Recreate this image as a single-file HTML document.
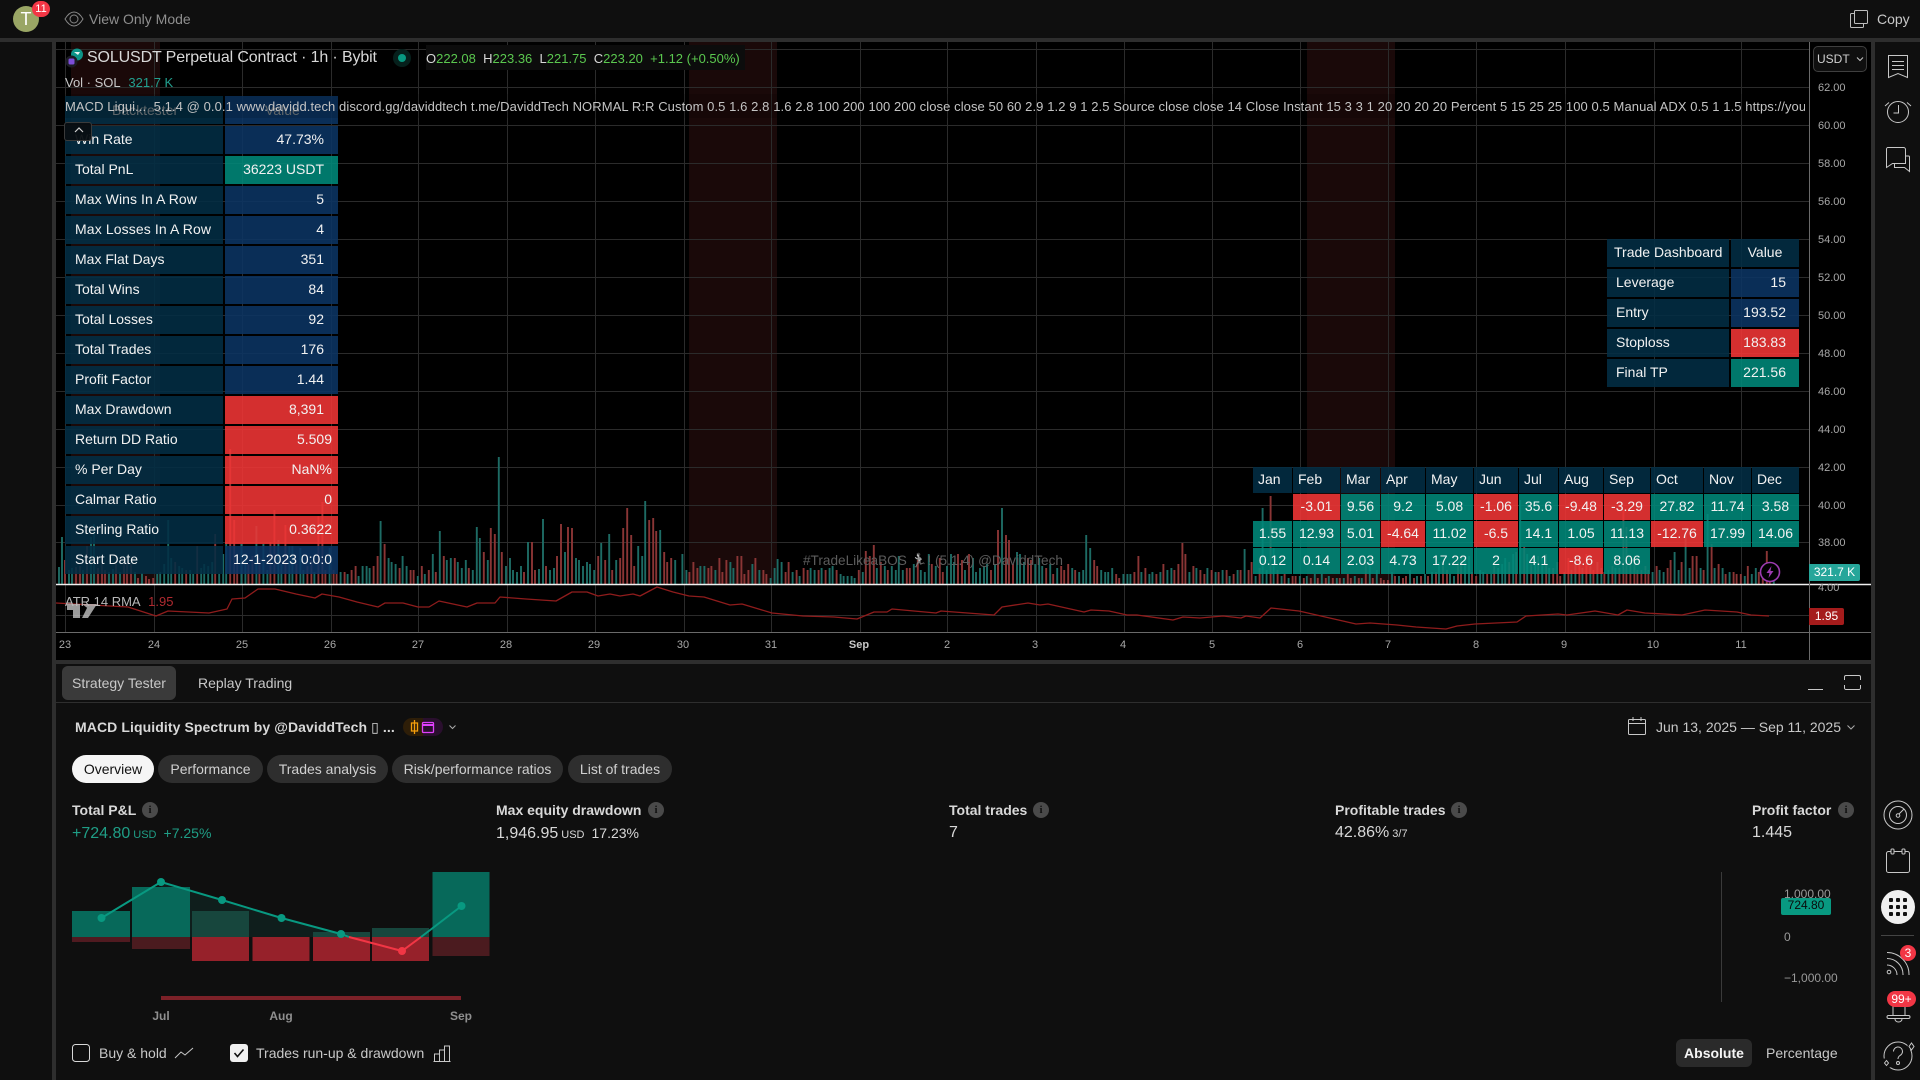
<!DOCTYPE html>
<html lang="en"><head><meta charset="utf-8"><title>SOLUSDT Strategy Tester</title>
<style>
html,body{margin:0;padding:0;background:#0f0f0f}
body{position:relative;width:1920px;height:1080px;overflow:hidden;font-family:"Liberation Sans",Arial,sans-serif;color:#ddd}
.a{position:absolute;white-space:nowrap}
.t{position:absolute;white-space:nowrap;line-height:16px}
.c{position:absolute;height:28px;line-height:26px;font-size:14px;color:#f2f2f2;box-sizing:border-box;white-space:nowrap}
.l{left:65px;width:158px;padding-left:10px;background:rgba(2,45,68,.88)}
.v{left:225px;width:113px;padding-right:14px;text-align:right;background:rgba(11,52,99,.88)}
.n{padding-right:6px}
.l2{left:1607px;width:122px;padding-left:9px;background:rgba(2,45,68,.88)}
.v2{left:1731px;width:68px;text-align:right;padding-right:13px;background:rgba(11,52,99,.88)}
.m{position:absolute;height:26px;line-height:24px;font-size:14px;color:#f2f2f2;text-align:center;background:rgba(0,137,122,.88);white-space:nowrap}
.mh{position:absolute;height:26px;line-height:24px;font-size:14px;color:#f2f2f2;background:rgba(2,45,68,.88);box-sizing:border-box;padding-left:5px}
.r{background:rgba(241,54,54,.88)}
.g{background:rgba(0,137,122,.88)}
.p{position:absolute;text-align:center;top:755px;height:28px;line-height:28px;font-size:14px;border-radius:14px;background:#2e2e2e;color:#d0d0d0}
.ax{position:absolute;left:1818px;font-size:11px;line-height:14px;color:#a8a8a8}
.tm{position:absolute;top:638px;width:40px;text-align:center;font-size:11px;line-height:14px;color:#a8a8a8}
.b{font-weight:bold;font-size:14px;color:#d8d8d8}
.i{position:absolute;width:16px;height:16px;border-radius:50%;background:#4a4a4a;color:#111;font:bold 11px/16px "Liberation Serif",serif;text-align:center}
.tx{font-size:16px;color:#d8d8d8}
svg{position:absolute;left:0;top:0}
</style></head>
<body>
<svg width="1920" height="1080" viewBox="0 0 1920 1080" fill="none">
<rect x="0" y="38" width="1920" height="4" fill="#2e2e2e"/>
<rect x="52" y="42" width="4" height="1038" fill="#2e2e2e"/>
<rect x="1871" y="42" width="4" height="1038" fill="#2e2e2e"/>
<rect x="56" y="42" width="1815" height="618" fill="#000"/>
<rect x="52" y="660" width="1823" height="4" fill="#2e2e2e"/>
<rect x="71" y="42" width="89" height="542" fill="#1a0909"/>
<rect x="689" y="42" width="88" height="542" fill="#1a0909"/>
<rect x="1307" y="42" width="88" height="542" fill="#1a0909"/>
<path stroke="#2b2b2b" d="M56 49.500H1809M56 87.500H1809M56 125.500H1809M56 163.500H1809M56 201.500H1809M56 239.500H1809M56 277.500H1809M56 315.500H1809M56 353.500H1809M56 391.500H1809M56 429.500H1809M56 467.500H1809M56 505.500H1809M56 542.500H1809M56 615.500H1809M65.500 42V632M154.500 42V632M242.500 42V632M331.500 42V632M418.500 42V632M507.500 42V632M595.500 42V632M684.500 42V632M771.500 42V632M860.500 42V632M947.500 42V632M1036.500 42V632M1124.500 42V632M1212.500 42V632M1300.500 42V632M1388.500 42V632M1476.500 42V632M1565.500 42V632M1654.500 42V632M1741.500 42V632"/>
<g stroke-width="1.9">
<g transform="translate(65 584)"><path stroke="#1d6b64" d="M-6 0v-17M-3 0v-47M4 0v-14M7 0v-16M18 0v-14M26 0v-47M29 0v-60M44 0v-12M48 0v-15M55 0v-12M70 0v-12M77 0v-11"/><path stroke="#8a3535" d="M0 0v-24M11 0v-17M15 0v-18M22 0v-38M33 0v-16M37 0v-20M40 0v-14M51 0v-20M59 0v-20M62 0v-21M66 0v-20M73 0v-6M81 0v-8M84 0v-5"/></g>
<g transform="translate(153.200 584)"><path stroke="#1d6b64" d="M4 0v-10M7 0v-12M11 0v-20M15 0v-64M18 0v-26M26 0v-18M29 0v-16M37 0v-14M40 0v-10M48 0v-16M51 0v-20M55 0v-18M59 0v-22M66 0v-10M70 0v-30M73 0v-42"/><path stroke="#8a3535" d="M0 0v-6M22 0v-22M33 0v-14M44 0v-38M62 0v-50M77 0v-135M81 0v-64M84 0v-30"/></g>
<g transform="translate(241.400 584)"><path stroke="#1d6b64" d="M0 0v-40M4 0v-30M15 0v-58M22 0v-40M26 0v-14M37 0v-44M40 0v-20M48 0v-38M51 0v-38M59 0v-36M62 0v-14M73 0v-12"/><path stroke="#8a3535" d="M7 0v-20M11 0v-28M18 0v-26M29 0v-42M33 0v-74M44 0v-59M55 0v-20M66 0v-18M70 0v-24M77 0v-68M81 0v-82M84 0v-14"/></g>
<g transform="translate(329.600 584)"><path stroke="#1d6b64" d="M0 0v-36M11 0v-12M18 0v-10M29 0v-8M33 0v-18M37 0v-18M40 0v-16M51 0v-63M59 0v-26M62 0v-22M66 0v-20M73 0v-28M77 0v-18"/><path stroke="#8a3535" d="M4 0v-14M7 0v-10M15 0v-12M22 0v-14M26 0v-18M44 0v-18M48 0v-28M55 0v-40M70 0v-16M81 0v-14M84 0v-14"/></g>
<g transform="translate(417.800 584)"><path stroke="#1d6b64" d="M0 0v-8M7 0v-10M15 0v-30M22 0v-53M29 0v-24M33 0v-26M40 0v-22M44 0v-16M48 0v-24M55 0v-14M59 0v-57M62 0v-46M70 0v-24M81 0v-127"/><path stroke="#8a3535" d="M4 0v-18M11 0v-14M18 0v-12M26 0v-28M37 0v-26M51 0v-16M66 0v-32M73 0v-56M77 0v-50M84 0v-32"/></g>
<g transform="translate(506 584)"><path stroke="#1d6b64" d="M0 0v-18M4 0v-26M7 0v-14M11 0v-12M15 0v-18M22 0v-42M33 0v-15M37 0v-65M44 0v-14M48 0v-16M59 0v-32M70 0v-26M73 0v-24M77 0v-18M81 0v-22M84 0v-20"/><path stroke="#8a3535" d="M18 0v-12M26 0v-42M29 0v-14M40 0v-18M51 0v-28M55 0v-60M62 0v-57M66 0v-56"/></g>
<g transform="translate(594.200 584)"><path stroke="#1d6b64" d="M0 0v-14M7 0v-41M15 0v-50M22 0v-24M44 0v-38M48 0v-28M51 0v-83M66 0v-54M81 0v-24"/><path stroke="#8a3535" d="M4 0v-28M11 0v-24M18 0v-14M26 0v-26M29 0v-56M33 0v-76M37 0v-49M40 0v-18M55 0v-64M59 0v-66M62 0v-53M70 0v-32M73 0v-22M77 0v-26"/></g>
<g transform="translate(682.400 584)"><path stroke="#1d6b64" d="M0 0v-30M4 0v-14M18 0v-18M22 0v-18M33 0v-14M48 0v-22M51 0v-16M70 0v-20M77 0v-14"/><path stroke="#8a3535" d="M7 0v-12M11 0v-22M15 0v-16M26 0v-16M29 0v-18M37 0v-26M40 0v-12M44 0v-24M55 0v-28M59 0v-28M62 0v-10M66 0v-14M73 0v-26M81 0v-14M84 0v-10"/></g>
<g transform="translate(770.600 584)"><path stroke="#1d6b64" d="M0 0v-6M4 0v-16M7 0v-25M11 0v-22M22 0v-12M29 0v-8M40 0v-16M44 0v-14M51 0v-16M59 0v-16M62 0v-18M70 0v-10M73 0v-8M77 0v-8M81 0v-8M84 0v-6"/><path stroke="#8a3535" d="M15 0v-12M18 0v-22M26 0v-14M33 0v-16M37 0v-14M48 0v-14M55 0v-14M66 0v-14"/></g>
<g transform="translate(858.800 584)"><path stroke="#1d6b64" d="M4 0v-12M18 0v-16M26 0v-18M33 0v-18M37 0v-14M40 0v-28M44 0v-14M55 0v-20M62 0v-14M66 0v-12M70 0v-30M77 0v-18"/><path stroke="#8a3535" d="M0 0v-14M7 0v-33M11 0v-28M15 0v-39M22 0v-22M29 0v-14M48 0v-16M51 0v-16M59 0v-24M73 0v-20M81 0v-26M84 0v-12"/></g>
<g transform="translate(947 584)"><path stroke="#1d6b64" d="M0 0v-18M4 0v-30M7 0v-22M18 0v-14M26 0v-26M29 0v-12M33 0v-16M37 0v-18M40 0v-20M48 0v-20M55 0v-76M70 0v-32M73 0v-30M77 0v-22"/><path stroke="#8a3535" d="M11 0v-30M15 0v-24M22 0v-30M44 0v-14M51 0v-54M59 0v-49M62 0v-44M66 0v-20M81 0v-26M84 0v-24"/></g>
<g transform="translate(1035.200 584)"><path stroke="#1d6b64" d="M0 0v-20M4 0v-26M7 0v-18M15 0v-20M22 0v-16M37 0v-16M44 0v-12M48 0v-14M51 0v-49M55 0v-36M66 0v-14M70 0v-12M73 0v-12M77 0v-16"/><path stroke="#8a3535" d="M11 0v-16M18 0v-10M26 0v-18M29 0v-14M33 0v-20M40 0v-14M59 0v-24M62 0v-18M81 0v-10M84 0v-6"/></g>
<g transform="translate(1123.400 584)"><path stroke="#1d6b64" d="M0 0v-10M4 0v-10M7 0v-10M18 0v-12M26 0v-10M29 0v-12M37 0v-12M44 0v-14M48 0v-16M66 0v-12M73 0v-16M84 0v-16"/><path stroke="#8a3535" d="M11 0v-12M15 0v-28M22 0v-16M33 0v-10M40 0v-20M51 0v-14M55 0v-20M59 0v-41M62 0v-30M70 0v-18M77 0v-14M81 0v-10"/></g>
<g transform="translate(1211.600 584)"><path stroke="#1d6b64" d="M4 0v-12M11 0v-14M18 0v-8M26 0v-14M33 0v-35M44 0v-8M51 0v-76M55 0v-14M62 0v-36M70 0v-8M77 0v-6"/><path stroke="#8a3535" d="M0 0v-14M7 0v-12M15 0v-14M22 0v-10M29 0v-14M37 0v-14M40 0v-22M48 0v-16M59 0v-88M66 0v-14M73 0v-10M81 0v-8M84 0v-8"/></g>
<g transform="translate(1299.800 584)"><path stroke="#1d6b64" d="M0 0v-8M7 0v-8M15 0v-10M22 0v-10M29 0v-8M37 0v-6M44 0v-6M55 0v-8M62 0v-6M70 0v-22M77 0v-14"/><path stroke="#8a3535" d="M4 0v-6M11 0v-6M18 0v-6M26 0v-6M33 0v-6M40 0v-6M48 0v-10M51 0v-6M59 0v-6M66 0v-22M73 0v-6M81 0v-6M84 0v-4"/></g>
<g transform="translate(1388 584)"><path stroke="#1d6b64" d="M4 0v-12M11 0v-8M22 0v-14M29 0v-8M37 0v-10M44 0v-12M51 0v-22M62 0v-10M66 0v-8M77 0v-26M81 0v-28"/><path stroke="#8a3535" d="M0 0v-4M7 0v-8M15 0v-6M18 0v-8M26 0v-6M33 0v-8M40 0v-8M48 0v-12M55 0v-20M59 0v-14M70 0v-22M73 0v-26M84 0v-12"/></g>
<g transform="translate(1476.200 584)"><path stroke="#1d6b64" d="M4 0v-14M7 0v-12M15 0v-10M22 0v-16M26 0v-20M29 0v-26M37 0v-30M44 0v-84M51 0v-30M59 0v-24M66 0v-26M73 0v-16"/><path stroke="#8a3535" d="M0 0v-8M11 0v-10M18 0v-18M33 0v-22M40 0v-32M48 0v-37M55 0v-22M62 0v-28M70 0v-30M77 0v-16M81 0v-22M84 0v-8"/></g>
<g transform="translate(1564.400 584)"><path stroke="#1d6b64" d="M0 0v-12M7 0v-14M11 0v-20M18 0v-16M26 0v-18M33 0v-22M37 0v-16M44 0v-14M51 0v-16"/><path stroke="#8a3535" d="M4 0v-26M15 0v-22M22 0v-30M29 0v-14M40 0v-12M48 0v-18M55 0v-16M59 0v-74M62 0v-57M66 0v-24M70 0v-28M73 0v-14M77 0v-14M81 0v-18M84 0v-14"/></g>
<g transform="translate(1652.600 584)"><path stroke="#1d6b64" d="M0 0v-12M7 0v-14M11 0v-12M22 0v-32M26 0v-14M33 0v-52M37 0v-16M48 0v-16M55 0v-70M62 0v-16M70 0v-16M77 0v-12"/><path stroke="#8a3535" d="M4 0v-18M15 0v-16M18 0v-24M29 0v-22M40 0v-28M44 0v-28M51 0v-14M59 0v-40M66 0v-20M73 0v-10M81 0v-12M84 0v-10"/></g>
<g transform="translate(1740.800 584)"><path stroke="#1d6b64" d="M4 0v-8M11 0v-10M15 0v-16M33 0v-4"/><path stroke="#8a3535" d="M0 0v-10M7 0v-18M18 0v-12M22 0v-18M26 0v-33M29 0v-4"/></g>
</g>
<path stroke="#f0f0f0" stroke-width="1.400" d="M56 584.500H1871"/>
<path stroke="#6a6a6a" d="M56 632.500H1871M1809.500 42V660"/>
<path stroke="#8f1c1c" stroke-width="1.300" stroke-linejoin="round" d="M56 603L128 607L156 616L168 611L209 613L227 609L232 599L245 598L258 589L275 589L296 594L315 598L322 594L339 597L357 602L378 607L385 603L403 603L418 607L429 607L439 601L467 607L477 603L495 603L500 597L526 599L556 601L572 592L587 592L598 596L610 594L620 596L633 594L640 596L657 587L673 592L689 596L704 597L730 605L742 604L772 613L803 616L834 617L857 619L874 612L887 612L892 609L936 613L941 611L994 615L1002 607L1028 603L1040 605L1048 604L1084 612L1091 610L1109 611L1127 615L1137 615L1173 620L1183 617L1200 618L1223 616L1241 618L1246 616L1260 618L1271 608L1299 611L1356 624L1370 623L1397 625L1416 627L1446 629L1457 626L1475 624L1517 622L1526 616L1558 614L1567 615L1595 611L1618 615L1627 610L1645 613L1682 615L1705 610L1737 612L1751 615L1769 616"/>
<path fill="#cfcfcf" opacity=".75" d="M67 604h13v14h-7v-8h-6zM82 604h8v6zM89 604h8l-9 14h-6z"/>
<circle cx="1770" cy="572" r="9.500" fill="#000" stroke="#9c3bb0" stroke-width="1.600"/>
<path fill="#9c3bb0" d="M1771.500 566l-5 7h3l-1 5 5-7h-3z"/>
</svg>

<!-- top bar -->
<div class="a" style="left:13px;top:6px;width:26px;height:26px;border-radius:50%;background:#9aa665;color:#fff;font-size:18px;line-height:26px;text-align:center">T</div>
<div class="a" style="left:32px;top:1px;width:18px;height:16px;border-radius:8px;background:#f23645;color:#fff;font-size:11px;line-height:16px;text-align:center">11</div>
<svg style="left:64px;top:9px" width="20" height="20" viewBox="0 0 20 20" fill="none" stroke="#888"><path d="M1 10C4 5 7 3 10 3s6 2 9 7c-3 5-6 7-9 7s-6-2-9-7z"/><circle cx="10" cy="10" r="4"/></svg>
<div class="t" style="left:89px;top:11px;font-size:14px;color:#8f8f8f">View Only Mode</div>
<svg style="left:1849px;top:9px" width="20" height="20" viewBox="0 0 20 20" fill="none" stroke="#bdbdbd"><path d="M6.500 1.500h11a1 1 0 0 1 1 1v11a1 1 0 0 1-1 1h-11a1 1 0 0 1-1-1v-11a1 1 0 0 1 1-1z"/><path d="M5.500 4.500h-3a1 1 0 0 0-1 1v12a1 1 0 0 0 1 1h11a1 1 0 0 0 1-1v-3"/></svg>
<div class="t" style="left:1877px;top:11px;font-size:14px;color:#c8c8c8">Copy</div>

<!-- legend -->
<div class="a" style="left:426px;top:45px;width:319px;height:25px;background:#0c0c0c"></div>
<svg style="left:64px;top:48px" width="22" height="20" viewBox="0 0 22 20"><circle cx="13" cy="6.500" r="6" fill="#0d9488"/><path d="M10 4h6l-2 3z" fill="#e8f5f3"/><circle cx="7.500" cy="13.500" r="6" fill="#1c1c24"/><rect x="4.500" y="10.500" width="6" height="6" rx="1.500" fill="#7c4dd8"/></svg>
<div class="t" style="left:87px;top:50px;font-size:16px;letter-spacing:-.13px;color:#d8d8d8">SOLUSDT Perpetual Contract · 1h · Bybit</div>
<svg style="left:393px;top:49px" width="18" height="18" viewBox="0 0 18 18"><circle cx="9" cy="9" r="9" fill="#06201c"/><circle cx="9" cy="9" r="4" fill="#089981"/></svg>
<div class="t" style="left:426px;top:51px;font-size:13px;color:#d8d8d8">O<span style="color:#5bc84f">222.08</span>&nbsp; H<span style="color:#5bc84f">223.36</span>&nbsp; L<span style="color:#5bc84f">221.75</span>&nbsp; C<span style="color:#5bc84f">223.20</span>&nbsp; <span style="color:#5bc84f">+1.12 (+0.50%)</span></div>
<div class="t" style="left:65px;top:75px;font-size:13px;color:#c8c8c8">Vol · SOL &nbsp;<span style="color:#22a08f;margin-left:1px">321.7 K</span></div>

<!-- left table -->
<div class="c l" style="top:96px"></div><div class="c v" style="top:96px"></div>
<div class="t" style="left:112px;top:102px;font-size:14px;color:#6b7478">Backtester</div>
<div class="t" style="left:265px;top:102px;font-size:14px;color:#6b7478">Value</div>
<div class="a" style="left:56px;top:94px;width:1753px;height:24px;background:rgba(0,0,0,.12)"></div>
<div class="a" style="left:65px;top:99px;width:1740px;overflow:hidden;font-size:13px;line-height:16px;letter-spacing:.08px;color:#c4c4c4">MACD Liqui... &nbsp;5.1.4 @ 0.0.1 www.davidd.tech discord.gg/daviddtech t.me/DaviddTech NORMAL R:R Custom 0.5 1.6 2.8 1.6 2.8 100 200 100 200 close close 50 60 2.9 1.2 9 1 2.5 Source close close 14 Close Instant 15 3 3 1 20 20 20 20 Percent 5 15 25 25 100 0.5 Manual ADX 0.5 1 1.5 https://youtube.com</div>
<div class="c l" style="top:126px">Win Rate</div><div class="c v" style="top:126px">47.73%</div>
<div class="a" style="left:64px;top:122px;width:28px;height:19px;box-sizing:border-box;border:1px solid #3a3a3a;border-radius:3px;background:rgba(8,14,18,.95)"><svg style="left:9px;top:3px" width="10" height="8" viewBox="0 0 10 8" fill="none" stroke="#d0d0d0" stroke-width="1.200"><path d="M1 6l4-4 4 4"/></svg></div>
<div class="c l" style="top:156px">Total PnL</div><div class="c v g" style="top:156px">36223 USDT</div>
<div class="c l" style="top:186px;letter-spacing:.08px">Max Wins In A Row</div><div class="c v" style="top:186px">5</div>
<div class="c l" style="top:216px;letter-spacing:.12px">Max Losses In A Row</div><div class="c v" style="top:216px">4</div>
<div class="c l" style="top:246px">Max Flat Days</div><div class="c v" style="top:246px">351</div>
<div class="c l" style="top:276px">Total Wins</div><div class="c v" style="top:276px">84</div>
<div class="c l" style="top:306px">Total Losses</div><div class="c v" style="top:306px">92</div>
<div class="c l" style="top:336px">Total Trades</div><div class="c v" style="top:336px">176</div>
<div class="c l" style="top:366px">Profit Factor</div><div class="c v" style="top:366px">1.44</div>
<div class="c l" style="top:396px">Max Drawdown</div><div class="c v r" style="top:396px">8,391</div>
<div class="c l" style="top:426px">Return DD Ratio</div><div class="c v r n" style="top:426px">5.509</div>
<div class="c l" style="top:456px">% Per Day</div><div class="c v r n" style="top:456px">NaN%</div>
<div class="c l" style="top:486px">Calmar Ratio</div><div class="c v r n" style="top:486px">0</div>
<div class="c l" style="top:516px">Sterling Ratio</div><div class="c v r n" style="top:516px">0.3622</div>
<div class="c l" style="top:546px">Start Date</div><div class="c v n" style="top:546px">12-1-2023 0:0:0</div>

<!-- dashboard -->
<div class="c l2" style="top:239px;padding-left:7px">Trade Dashboard</div><div class="c v2" style="top:239px;background:rgba(2,45,68,.88);text-align:center;padding:0">Value</div>
<div class="c l2" style="top:269px">Leverage</div><div class="c v2" style="top:269px">15</div>
<div class="c l2" style="top:299px">Entry</div><div class="c v2" style="top:299px">193.52</div>
<div class="c l2" style="top:329px">Stoploss</div><div class="c v2 r" style="top:329px">183.83</div>
<div class="c l2" style="top:359px">Final TP</div><div class="c v2 g" style="top:359px">221.56</div>

<!-- monthly -->
<div class="mh" style="left:1253px;top:467px;width:39px">Jan</div><div class="mh" style="left:1293px;top:467px;width:47px">Feb</div><div class="mh" style="left:1341px;top:467px;width:39px">Mar</div><div class="mh" style="left:1381px;top:467px;width:44px">Apr</div><div class="mh" style="left:1426px;top:467px;width:47px">May</div><div class="mh" style="left:1474px;top:467px;width:44px">Jun</div><div class="mh" style="left:1519px;top:467px;width:39px">Jul</div><div class="mh" style="left:1559px;top:467px;width:44px">Aug</div><div class="mh" style="left:1604px;top:467px;width:46px">Sep</div><div class="mh" style="left:1651px;top:467px;width:52px">Oct</div><div class="mh" style="left:1704px;top:467px;width:47px">Nov</div><div class="mh" style="left:1752px;top:467px;width:47px">Dec</div>
<div class="m r" style="left:1293px;top:494px;width:47px">-3.01</div><div class="m" style="left:1341px;top:494px;width:39px">9.56</div><div class="m" style="left:1381px;top:494px;width:44px">9.2</div><div class="m" style="left:1426px;top:494px;width:47px">5.08</div><div class="m r" style="left:1474px;top:494px;width:44px">-1.06</div><div class="m" style="left:1519px;top:494px;width:39px">35.6</div><div class="m r" style="left:1559px;top:494px;width:44px">-9.48</div><div class="m r" style="left:1604px;top:494px;width:46px">-3.29</div><div class="m" style="left:1651px;top:494px;width:52px">27.82</div><div class="m" style="left:1704px;top:494px;width:47px">11.74</div><div class="m" style="left:1752px;top:494px;width:47px">3.58</div>
<div class="m" style="left:1253px;top:521px;width:39px">1.55</div><div class="m" style="left:1293px;top:521px;width:47px">12.93</div><div class="m" style="left:1341px;top:521px;width:39px">5.01</div><div class="m r" style="left:1381px;top:521px;width:44px">-4.64</div><div class="m" style="left:1426px;top:521px;width:47px">11.02</div><div class="m r" style="left:1474px;top:521px;width:44px">-6.5</div><div class="m" style="left:1519px;top:521px;width:39px">14.1</div><div class="m" style="left:1559px;top:521px;width:44px">1.05</div><div class="m" style="left:1604px;top:521px;width:46px">11.13</div><div class="m r" style="left:1651px;top:521px;width:52px">-12.76</div><div class="m" style="left:1704px;top:521px;width:47px">17.99</div><div class="m" style="left:1752px;top:521px;width:47px">14.06</div>
<div class="m" style="left:1253px;top:548px;width:39px">0.12</div><div class="m" style="left:1293px;top:548px;width:47px">0.14</div><div class="m" style="left:1341px;top:548px;width:39px">2.03</div><div class="m" style="left:1381px;top:548px;width:44px">4.73</div><div class="m" style="left:1426px;top:548px;width:47px">17.22</div><div class="m" style="left:1474px;top:548px;width:44px">2</div><div class="m" style="left:1519px;top:548px;width:39px">4.1</div><div class="m r" style="left:1559px;top:548px;width:44px">-8.6</div><div class="m" style="left:1604px;top:548px;width:46px">8.06</div>

<div class="t" style="left:803px;top:553px;font-size:13.600px;color:#5c5c5c;filter:grayscale(1)">#TradeLikeaBOS 🏃! (5.1.4) @DaviddTech</div>
<div class="t" style="left:65px;top:594px;font-size:13px;color:#b8b8b8">ATR 14 RMA &nbsp;<span style="color:#b02a30;margin-left:1px">1.95</span></div>

<!-- price axis -->
<div class="a" style="left:1813px;top:46px;width:54px;height:26px;box-sizing:border-box;border:1px solid #3f3f3f;border-radius:5px;background:#0f0f0f;color:#d0d0d0;font-size:12px;line-height:24px;padding-left:3px">USDT<svg style="left:42px;top:9px" width="8" height="6" viewBox="0 0 8 6" fill="none" stroke="#c8c8c8"><path d="M1 1.500l3 3 3-3"/></svg></div>
<div class="ax" style="top:81px">62.00</div><div class="ax" style="top:119px">60.00</div><div class="ax" style="top:157px">58.00</div><div class="ax" style="top:195px">56.00</div><div class="ax" style="top:233px">54.00</div><div class="ax" style="top:271px">52.00</div><div class="ax" style="top:309px">50.00</div><div class="ax" style="top:347px">48.00</div><div class="ax" style="top:385px">46.00</div><div class="ax" style="top:423px">44.00</div><div class="ax" style="top:461px">42.00</div><div class="ax" style="top:499px">40.00</div><div class="ax" style="top:536px">38.00</div>
<div class="ax" style="top:581px">4.00</div>
<div class="a" style="left:1809px;top:564px;width:51px;height:17px;background:#26a69a;border-radius:0 2px 2px 0;color:#fff;font-size:12px;line-height:17px;text-align:center">321.7 K</div>
<div class="a" style="left:1809px;top:608px;width:35px;height:17px;background:#a51c1c;border-radius:0 2px 2px 0;color:#fff;font-size:12px;line-height:17px;text-align:center">1.95</div>

<!-- time axis -->
<div class="tm" style="left:45px">23</div><div class="tm" style="left:134px">24</div><div class="tm" style="left:222px">25</div><div class="tm" style="left:310px">26</div><div class="tm" style="left:398px">27</div><div class="tm" style="left:486px">28</div><div class="tm" style="left:574px">29</div><div class="tm" style="left:663px">30</div><div class="tm" style="left:751px">31</div><div class="tm" style="left:839px;font-weight:bold;color:#c8c8c8">Sep</div><div class="tm" style="left:927px">2</div><div class="tm" style="left:1015px">3</div><div class="tm" style="left:1103px">4</div><div class="tm" style="left:1192px">5</div><div class="tm" style="left:1280px">6</div><div class="tm" style="left:1368px">7</div><div class="tm" style="left:1456px">8</div><div class="tm" style="left:1544px">9</div><div class="tm" style="left:1633px">10</div><div class="tm" style="left:1721px">11</div>

<!-- right sidebar -->
<svg style="left:1875px;top:42px" width="45" height="1038" viewBox="1875 42 45 1038" fill="none" stroke="#c8c8c8" stroke-width="1">
<path d="M1888.500 55.500h19v22l-9.500-4-9.500 4zM1892 61.500h12M1892 65.500h12M1892 69.500h12"/>
<circle cx="1898" cy="112" r="10.500"/><path d="M1898.500 105v8h-5M1885 106l4-3.500M1911 106l-4-3.500"/>
<path d="M1887.500 147.500h16a2 2 0 0 1 2 2v14h-13l-6 4v-18a2 2 0 0 1 1-2zM1905.500 156h3a1 1 0 0 1 1 1v14.500l-5-4h-10v-3.500"/>
<circle cx="1898" cy="815" r="14"/><circle cx="1898" cy="815" r="8.500"/><circle cx="1898" cy="815.500" r="1.800"/><path d="M1899 814l5-5"/>
<rect x="1886.500" y="851.500" width="23" height="21" rx="2"/><rect x="1891" y="849" width="3" height="5" rx="1" fill="#0f0f0f"/><rect x="1902" y="849" width="3" height="5" rx="1" fill="#0f0f0f"/>
<circle cx="1898" cy="907" r="17" fill="#f0f0f0" stroke="none"/>
<g fill="#111" stroke="none"><rect x="1889" y="898" width="4" height="4" rx="1"/><rect x="1896" y="898" width="4" height="4" rx="1"/><rect x="1903" y="898" width="4" height="4" rx="1"/><rect x="1889" y="905" width="4" height="4" rx="1"/><rect x="1896" y="905" width="4" height="4" rx="1"/><rect x="1903" y="905" width="4" height="4" rx="1"/><rect x="1889" y="912" width="4" height="4" rx="1"/><rect x="1896" y="912" width="4" height="4" rx="1"/><rect x="1903" y="912" width="4" height="4" rx="1"/></g>
<path stroke="#444" d="M1881 935.500h33"/>
<circle cx="1889" cy="972" r="1.800"/><path d="M1887 965a10 10 0 0 1 10 10M1887 958.500a16 16 0 0 1 16 16.500M1887 952.500a22 22 0 0 1 22 22.500"/>
<path d="M1893 1005v10M1905 1005v10M1888.500 1015.500h20a1 1 0 0 1 0 3h-20a1 1 0 0 1 0-3zM1895 1019a3.500 3 0 0 0 7 0"/>
<circle cx="1898" cy="1056" r="14"/><path fill="#0f0f0f" stroke="#0f0f0f" stroke-width="3" d="M1909 1042h5v6h-5zM1884 1060h5v6h-5z"/>
<path d="M1909 1046.500l2.500-3.500 2.500 3.500-2.500 3.500zM1884.500 1063l2-2.500 2 2.500-2 2.500z"/>
<path d="M1893.500 1051.500a4.500 4.500 0 1 1 6.500 4c-1.500 1-2 2-2 3.500"/><circle cx="1898" cy="1063" r="1.500"/>
</svg>
<div class="a" style="left:1900px;top:945px;width:16px;height:16px;border-radius:50%;background:#f23645;color:#fff;font-size:12px;line-height:16px;text-align:center">3</div>
<div class="a" style="left:1887px;top:991px;width:29px;height:16px;border-radius:8px;background:#f23645;color:#fff;font-size:12px;line-height:16px;text-align:center">99+</div>

<!-- bottom panel -->
<div class="a" style="left:62px;top:666px;width:114px;height:34px;border-radius:6px;background:#3a3a3a;color:#c8c8c8;font-size:14px;line-height:34px;text-align:center">Strategy Tester</div>
<div class="t" style="left:198px;top:675px;font-size:14px;color:#c8c8c8">Replay Trading</div>
<div class="a" style="left:56px;top:702px;width:1815px;height:1px;background:#2e2e2e"></div>
<svg style="left:1808px;top:674px" width="54" height="18" viewBox="0 0 54 18" fill="none" stroke="#c8c8c8"><path d="M0 15.500h15"/><path d="M36.500 6V3a1.500 1.500 0 0 1 1.500-1.500h13A1.500 1.500 0 0 1 52.500 3v3M36.500 11v3a1.500 1.500 0 0 0 1.500 1.500h13a1.500 1.500 0 0 0 1.500-1.500v-3"/></svg>
<div class="t" style="left:75px;top:719px;font-size:14px;font-weight:bold;letter-spacing:.09px;color:#d8d8d8">MACD Liquidity Spectrum by @DaviddTech <span style="font-weight:normal">▯</span> ...</div>
<div class="a" style="left:403px;top:718px;width:20px;height:18px;background:#2e1e08;border-radius:9px 0 0 9px"></div>
<div class="a" style="left:423px;top:718px;width:20px;height:18px;background:#2a0f2e;border-radius:0 9px 9px 0"></div>
<svg style="left:403px;top:718px" width="60" height="18" viewBox="0 0 60 18" fill="none"><path stroke="#f59e0b" stroke-width="1.300" d="M11.500 2v14M8.500 5h6v8h-6z"/><rect x="19.500" y="4.500" width="11" height="10" rx="1" stroke="#e040fb" stroke-width="1.300"/><path stroke="#e040fb" stroke-width="2" d="M20 7h10"/><path stroke="#aaa" d="M46.500 7.500l3 3 3-3"/></svg>
<svg style="left:1627px;top:716px" width="20" height="20" viewBox="0 0 20 20" fill="none" stroke="#c8c8c8"><rect x="1.500" y="3.500" width="17" height="15" rx="1"/><path d="M1.500 7.500h17M6 1v4M14 1v4"/></svg>
<div class="t" style="left:1656px;top:719px;font-size:14px;color:#c8c8c8">Jun 13, 2025 — Sep 11, 2025</div>
<svg style="left:1846px;top:724px" width="10" height="7" viewBox="0 0 10 7" fill="none" stroke="#aaa"><path d="M1.500 1.500l3.500 3.500 3.500-3.500"/></svg>

<div class="p" style="left:72px;width:82px;background:#f5f5f5;color:#111">Overview</div>
<div class="p" style="left:158px;width:105px">Performance</div>
<div class="p" style="left:267px;width:121px">Trades analysis</div>
<div class="p" style="left:392px;width:171px">Risk/performance ratios</div>
<div class="p" style="left:568px;width:104px">List of trades</div>

<div class="t b" style="left:72px;top:802px">Total P&amp;L</div><div class="i" style="left:142px;top:802px">i</div>
<div class="t b" style="left:496px;top:802px">Max equity drawdown</div><div class="i" style="left:648px;top:802px">i</div>
<div class="t b" style="left:949px;top:802px">Total trades</div><div class="i" style="left:1033px;top:802px">i</div>
<div class="t b" style="left:1335px;top:802px">Profitable trades</div><div class="i" style="left:1451px;top:802px">i</div>
<div class="t b" style="left:1752px;top:802px">Profit factor</div><div class="i" style="left:1838px;top:802px">i</div>

<div class="t tx" style="left:72px;top:825px;color:#1f9e86">+724.80<span style="font-size:11px;margin-left:3px">USD</span><span style="font-size:14px;margin-left:7px">+7.25%</span></div>
<div class="t tx" style="left:496px;top:825px">1,946.95<span style="font-size:11px;margin-left:3px">USD</span><span style="font-size:14px;margin-left:7px">17.23%</span></div>
<div class="t tx" style="left:949px;top:825px">7</div>
<div class="t tx" style="left:1335px;top:825px">42.86%<span style="font-size:11px;margin-left:3px">3/7</span></div>
<div class="t tx" style="left:1752px;top:825px">1.445</div>

<svg width="1920" height="1080" viewBox="0 0 1920 1080" fill="none" style="pointer-events:none">
<path fill="#0f1e1c" d="M161 882L222 900L281 918L341 934L360 937H161z"/>
<rect x="72" y="911" width="58" height="26" fill="#07695a"/><rect x="72" y="937" width="58" height="5" fill="#501a20"/>
<rect x="132" y="887" width="58" height="50" fill="#07695a"/><rect x="132" y="937" width="58" height="12" fill="#4b1b1f"/>
<rect x="192" y="911" width="57" height="26" fill="#17463d"/><rect x="192" y="937" width="57" height="24" fill="#96212a"/>
<rect x="252.500" y="937" width="57" height="24" fill="#96212a"/>
<rect x="313" y="932" width="57" height="5" fill="#17463d"/><rect x="313" y="937" width="57" height="24" fill="#96212a"/>
<rect x="372" y="928" width="57" height="9" fill="#17463d"/><rect x="372" y="937" width="57" height="24" fill="#96212a"/>
<rect x="432.500" y="872" width="57" height="65" fill="#07695a"/><rect x="432.500" y="937" width="57" height="19" fill="#4b1b1f"/>
<path stroke="#089981" stroke-width="2" d="M101.500 918L161 882L222 900L281.500 918L341 934L349 937"/><path stroke="#f23645" stroke-width="2" d="M349 937L402 951L421 937"/><path stroke="#089981" stroke-width="2" d="M421 937L461.500 906"/>
<g fill="#089981"><circle cx="101.500" cy="918" r="4"/><circle cx="161" cy="882" r="4"/><circle cx="222" cy="900" r="4"/><circle cx="281.500" cy="918" r="4"/><circle cx="341" cy="934" r="4"/><circle cx="461.500" cy="906" r="4"/></g><circle cx="402" cy="951" r="4" fill="#f23645"/>
<rect x="161" y="996" width="300" height="4" fill="#7c2128"/>
<path stroke="#3a3a3a" d="M1721.500 872V1002"/>
<rect x="72.500" y="1044.500" width="17" height="17" rx="3" stroke="#d8d8d8"/>
<rect x="230" y="1044" width="18" height="18" rx="3" fill="#f0f0f0"/><path stroke="#111" stroke-width="1.600" d="M234.500 1053l3 3.500 6-7"/>
<path stroke="#c8c8c8" d="M175 1058l6-6 4 3 8-7"/>
<path stroke="#c8c8c8" d="M433.500 1061.500h17M434.500 1061v-7h5v7M439.500 1061v-11h5v11M444.500 1061v-15h5v15"/>
</svg>
<div class="t" style="left:161px;top:1008px;width:0;font-size:12px;font-weight:bold;color:#8f8f8f"><span style="position:absolute;left:-20px;width:40px;text-align:center">Jul</span></div>
<div class="t" style="left:281px;top:1008px;width:0;font-size:12px;font-weight:bold;color:#8f8f8f"><span style="position:absolute;left:-20px;width:40px;text-align:center">Aug</span></div>
<div class="t" style="left:461px;top:1008px;width:0;font-size:12px;font-weight:bold;color:#8f8f8f"><span style="position:absolute;left:-20px;width:40px;text-align:center">Sep</span></div>
<div class="t" style="left:1784px;top:886px;font-size:12px;color:#9a9a9a">1,000.00</div>
<div class="a" style="left:1781px;top:898px;width:50px;height:17px;background:#089981;border-radius:2px;color:#0a0a0a;font-size:12px;line-height:14px;text-align:center">724.80</div>
<div class="t" style="left:1784px;top:929px;font-size:12px;color:#9a9a9a">0</div>
<div class="t" style="left:1784px;top:970px;font-size:12px;color:#9a9a9a">−1,000.00</div>
<div class="t" style="left:99px;top:1045px;font-size:14px;color:#c8c8c8">Buy &amp; hold</div>
<div class="t" style="left:256px;top:1045px;font-size:14px;color:#c8c8c8">Trades run-up &amp; drawdown</div>
<div class="a" style="left:1676px;top:1039px;width:76px;height:28px;border-radius:6px;background:#2a2a2a;color:#f5f5f5;font-size:14px;font-weight:bold;line-height:28px;text-align:center">Absolute</div>
<div class="t" style="left:1766px;top:1045px;font-size:14px;color:#c8c8c8">Percentage</div>
</body></html>
